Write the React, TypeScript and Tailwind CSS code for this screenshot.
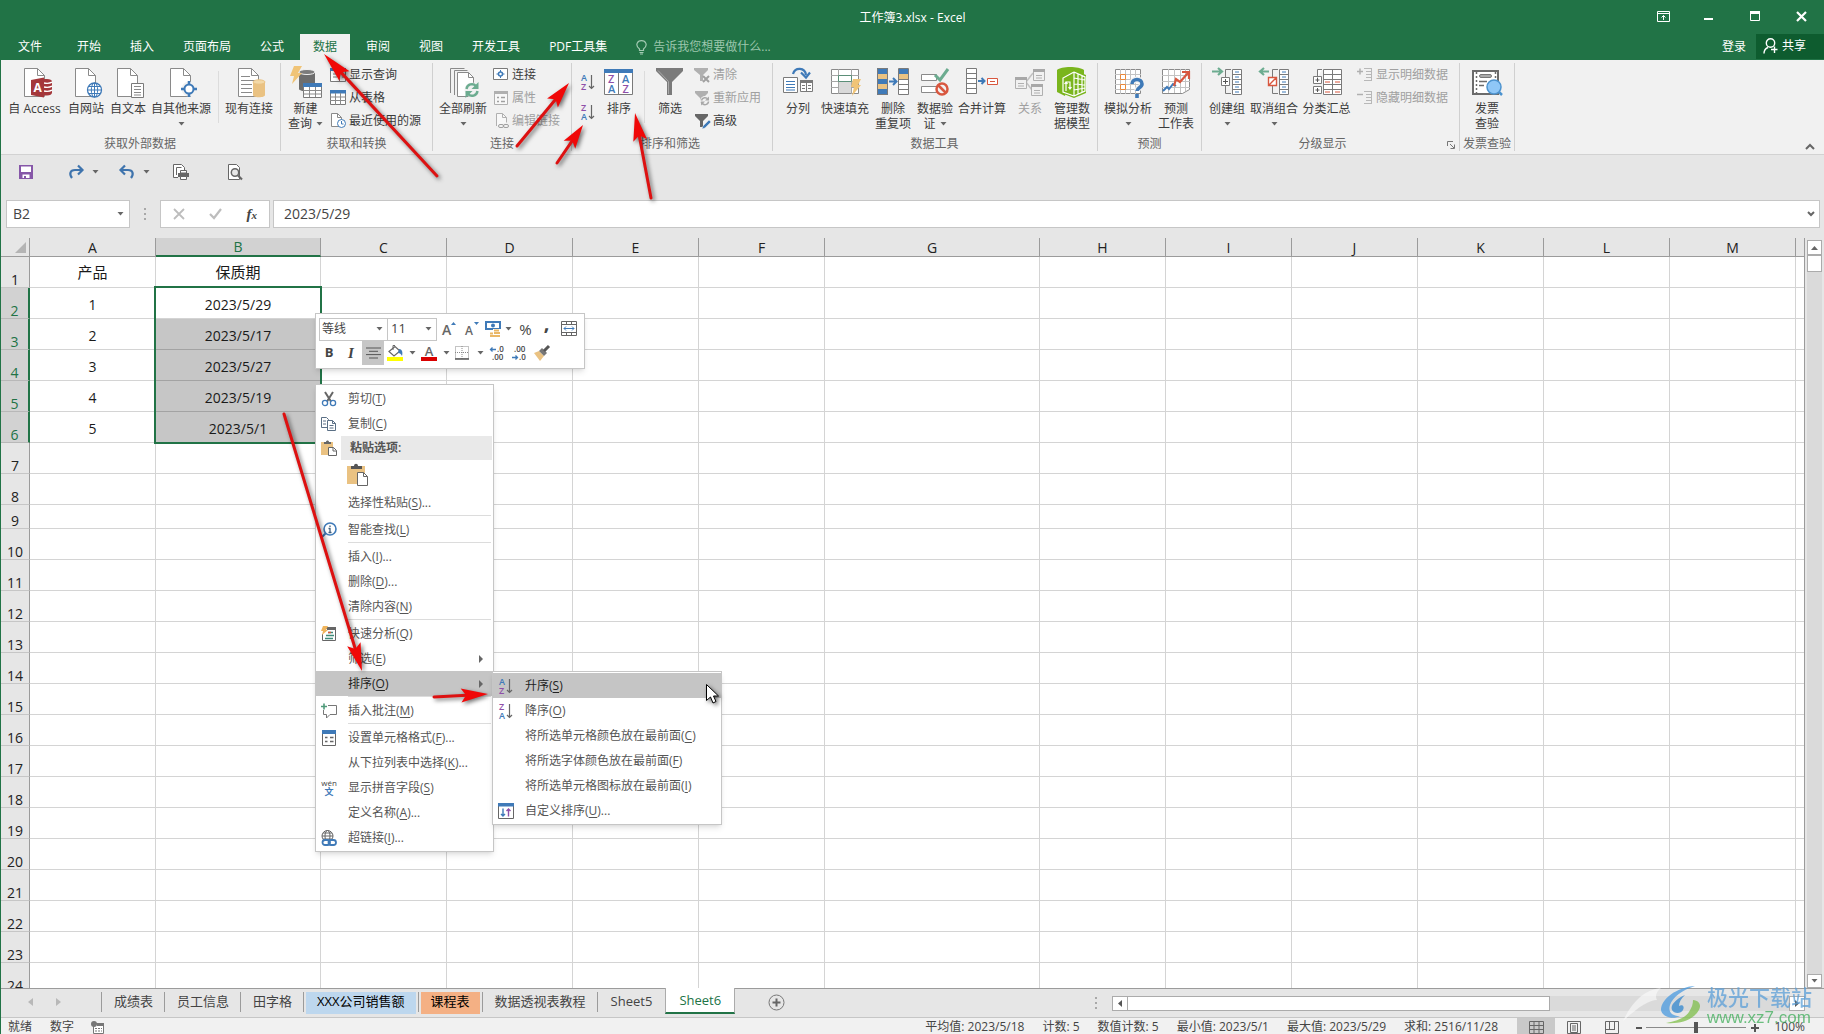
import { useState, type ReactNode } from "react";

interface BigItem {
  lines: string[];
  width: string;
  icon: ReactNode;
  caret?: boolean;
  disabled?: boolean;
}

interface SmallItem {
  label: string;
  icon: ReactNode;
  disabled?: boolean;
}

interface MenuEntry {
  label?: string;
  hotkey?: string;
  more?: boolean;
  icon?: ReactNode;
  arrow?: boolean;
  active?: boolean;
  kind?: "separator" | "header" | "paste";
}

const COLUMNS = [
  { name: "A", width: "w-[126px]" },
  { name: "B", width: "w-[165px]" },
  { name: "C", width: "w-[126px]" },
  { name: "D", width: "w-[126px]" },
  { name: "E", width: "w-[126px]" },
  { name: "F", width: "w-[126px]" },
  { name: "G", width: "w-[215px]" },
  { name: "H", width: "w-[126px]" },
  { name: "I", width: "w-[126px]" },
  { name: "J", width: "w-[126px]" },
  { name: "K", width: "w-[126px]" },
  { name: "L", width: "w-[126px]" },
  { name: "M", width: "w-[126px]" },
];

const ROWS: Record<number, string[]> = {
  1: ["产品", "保质期"],
  2: ["1", "2023/5/29"],
  3: ["2", "2023/5/17"],
  4: ["3", "2023/5/27"],
  5: ["4", "2023/5/19"],
  6: ["5", "2023/5/1"],
};

const TABS = ["开始", "插入", "页面布局", "公式", "数据", "审阅", "视图", "开发工具", "PDF工具集"];

/* ---------- icons ---------- */

function Svg({ size = 32, children }: { size?: number; children: ReactNode }) {
  return (
    <svg width={size} height={size} viewBox={`0 0 ${size} ${size}`} fill="none" className="shrink-0 overflow-visible" aria-hidden="true">
      {children}
    </svg>
  );
}

function Caret() {
  return (
    <svg width="7" height="4" viewBox="0 0 7 4" className="inline-block shrink-0" aria-hidden="true">
      <path d="M0.500 0h6L3.500 3.500z" fill="#666" />
    </svg>
  );
}

function PageShape() {
  return (
    <>
      <path d="M5.500 2.500h13l7 7v21h-20z" fill="#fff" stroke="#8a8a8a" />
      <path d="M18.500 2.500v7h7" stroke="#8a8a8a" />
    </>
  );
}

const AccessIcon = (
  <Svg>
    <PageShape />
    <path d="M24 13h4c3 0 5 1 5 2.500v11c0 1.800-2 3-5 3h-4z" fill="#a4373a" />
    <path d="M25 17c3 .6 6 .3 8-.8M25 21c3 .6 6 .3 8-.8M25 25c3 .6 6 .3 8-.8" stroke="#fff" strokeWidth="1.400" />
    <path d="M12 14l13-2.500v20L12 29z" fill="#a4373a" />
    <text x="14.500" y="26" fontSize="12" fontWeight="700" fill="#fff" fontFamily="Open Sans">A</text>
  </Svg>
);

const WebIcon = (
  <Svg>
    <PageShape />
    <circle cx="24.500" cy="24" r="7" fill="#fff" stroke="#3f7ab8" strokeWidth="1.300" />
    <ellipse cx="24.500" cy="24" rx="3.200" ry="7" stroke="#3f7ab8" />
    <path d="M17.500 24h14M18.500 20.500h12M18.500 27.500h12M24.500 17v14" stroke="#3f7ab8" />
  </Svg>
);

const TextIcon = (
  <Svg>
    <PageShape />
    <path d="M19.500 17.500h12v14h-12z" fill="#fff" stroke="#7a7a7a" />
    <path d="M22 20.500h7M22 23.500h7M22 26.500h7M22 29h7" stroke="#8a8a8a" />
  </Svg>
);

const SourceIcon = (
  <Svg>
    <PageShape />
    <circle cx="24" cy="23" r="7.500" fill="#f1f1f1" />
    <circle cx="24" cy="23" r="4.500" fill="#fff" stroke="#3f7ab8" strokeWidth="2" />
    <path d="M24 15v4M24 27v4M16 23h4M28 23h4" stroke="#3f7ab8" strokeWidth="2.500" />
  </Svg>
);

const ExistingIcon = (
  <Svg>
    <PageShape />
    <path d="M8 10.500h9M8 14.500h14M8 18.500h11M8 22.500h11M8 26.500h11" stroke="#8a8a8a" />
    <path d="M20 16v13c0 3 12 3 12 0V16z" fill="#eac282" />
    <ellipse cx="26" cy="16" rx="6" ry="2.200" fill="#f3d9a8" stroke="#eac282" />
  </Svg>
);

const NewQueryIcon = (
  <Svg>
    <path d="M9 6v17c0 3 16 3 16 0V6z" fill="#6d6d6d" />
    <ellipse cx="17" cy="6" rx="8" ry="2.500" fill="#7b7b7b" stroke="#f1f1f1" />
    <path d="M4 0h8L8 7h4L2 18l2-8H0z" fill="#f0c477" />
    <path d="M13.500 17.500h18v14h-18z" fill="#fff" stroke="#7a7a7a" />
    <path d="M13 17h19v4H13z" fill="#3f7ab8" />
    <path d="M13.500 24.500h18M13.500 28h18M19.500 21v10M25.500 21v10" stroke="#8a8a8a" />
  </Svg>
);

const RefreshAllIcon = (
  <Svg>
    <path d="M3.500 27V2.500h14M7.500 29V4.500h13" stroke="#8a8a8a" />
    <path d="M10.500 6.500h11l5 5v19h-16z" fill="#fff" stroke="#8a8a8a" />
    <path d="M21.500 6.500v5h5" stroke="#8a8a8a" />
    <circle cx="25" cy="24" r="7.500" fill="#f1f1f1" />
    <path d="M19.500 23a5.500 5.500 0 0 1 9.500-3M30.500 25a5.500 5.500 0 0 1-9.500 3" stroke="#6cac90" strokeWidth="2.400" />
    <path d="M31.500 16v7h-7zM18.500 32v-7h7z" fill="#6cac90" />
  </Svg>
);

const SortIcon = (
  <Svg>
    <path d="M1.500 3.500h28v25h-28z" fill="#fff" stroke="#7a7a7a" />
    <path d="M1 3h29v4H1z" fill="#3f7ab8" />
    <path d="M15.500 7v21" stroke="#7a7a7a" />
    <g fontSize="11" fontWeight="600" fontFamily="Open Sans">
      <text x="5" y="17" fill="#8e4fa8">Z</text>
      <text x="5" y="27" fill="#3f7ab8">A</text>
      <text x="19" y="17" fill="#3f7ab8">A</text>
      <text x="19.500" y="27" fill="#8e4fa8">Z</text>
    </g>
  </Svg>
);

const FilterIcon = (
  <Svg>
    <path d="M2 2h27v3L18 16v13h-5V16L2 5z" fill="#7a7a7a" />
    <path d="M4 4.500l10.500 11V28" stroke="#a9a9a9" />
  </Svg>
);

const SplitIcon = (
  <Svg>
    <path d="M1.500 11.500h14v15h-14z" fill="#fff" stroke="#7a7a7a" />
    <path d="M4 15.500h9M4 18.500h9M4 21.500h9M4 24h9" stroke="#3f7ab8" />
    <path d="M18.500 14.500h12v11h-12z" fill="#fff" stroke="#7a7a7a" />
    <path d="M18 14h13v3H18z" fill="#7a7a7a" />
    <path d="M24.500 17v8M20 19.500h3M20 22.500h3M26 19.500h3M26 22.500h3" stroke="#7a7a7a" />
    <path d="M11 8c2-7 12-7 13 1" stroke="#3f7ab8" strokeWidth="2.200" />
    <path d="M19 6.500l5 5 4-5" stroke="#3f7ab8" strokeWidth="2.200" />
  </Svg>
);

const FlashFillIcon = (
  <Svg>
    <path d="M2.500 3.500h27v24h-27z" fill="#fff" stroke="#8a8a8a" />
    <path d="M9.500 3v25M22.500 3v25M2 9.500h28M2 15.500h28M2 21.500h28" stroke="#a6a6a6" />
    <path d="M10 16h12v11H10z" fill="#d9d9d9" />
    <path d="M9.500 9.500h13v6h-13z" fill="#fff" stroke="#5b8f78" />
    <path d="M24 13h8l-3 6h3l-9 11 2-9h-3z" fill="#f0c477" />
  </Svg>
);

const DedupeIcon = (
  <Svg>
    <path d="M0 2h11v27H0z" fill="#3f7ab8" />
    <path d="M0 8h11v5H0zM0 18h11v5H0z" fill="#eac282" />
    <path d="M0.500 2.500h10v26H0.500z" stroke="#7a7a7a" />
    <path d="M21.500 2.500h10v26h-10z" fill="#fff" stroke="#7a7a7a" />
    <path d="M22 3h9v5h-9z" fill="#3f7ab8" />
    <path d="M22 8h9v5h-9z" fill="#eac282" />
    <path d="M21.500 13.500h10M21.500 18.500h10M21.500 23.500h10" stroke="#7a7a7a" />
    <path d="M12 15.500h7M16 12l3.500 3.500L16 19" stroke="#3f7ab8" strokeWidth="2" />
  </Svg>
);

const ValidateIcon = (
  <Svg>
    <path d="M2.500 8.500h15v6h-15zM2.500 20.500h15v6h-15z" fill="#fff" stroke="#8a8a8a" />
    <path d="M16 9l5 5 8-11" stroke="#6cac90" strokeWidth="3" />
    <circle cx="23" cy="23" r="5.500" fill="#f1f1f1" stroke="#d8573f" strokeWidth="2.500" />
    <path d="M19 19l8 8" stroke="#d8573f" strokeWidth="2.500" />
  </Svg>
);

const ConsolidateIcon = (
  <Svg>
    <path d="M0.500 2.500h10v25h-10z" fill="#fff" stroke="#7a7a7a" />
    <path d="M0 7.500h11M0 12.500h11M0 17.500h11M0 22.500h11" stroke="#7a7a7a" />
    <path d="M12 15h6M15.500 12l3 3-3 3" stroke="#3f7ab8" strokeWidth="2" />
    <path d="M21.500 12.500h10v6h-10z" fill="#fff" stroke="#d8573f" />
    <path d="M24 15.500h5" stroke="#d8573f" />
  </Svg>
);

const RelationIcon = (
  <Svg>
    <path d="M12 16l7-9M12 16l6 8" stroke="#c2c2c2" strokeWidth="1.500" />
    <path d="M1.500 11.500h11v11h-11zM19.500 3.500h11v11h-11zM17.500 18.500h11v11h-11z" fill="#f1f1f1" stroke="#b0b0b0" />
    <path d="M1 11h12v3H1zM19 3h12v3H19zM17 18h12v3H17z" fill="#a8a8a8" />
    <path d="M4 17.500h6M4 20h6M22 9.500h6M22 12h6M20 24.500h6M20 27h6" stroke="#b0b0b0" />
  </Svg>
);

const DataModelIcon = (
  <Svg>
    <path d="M1 4c4-4 22-4 27 0v7H13L9 30l-8-4z" fill="#7ab51d" />
    <path d="M5 11l13-7 12 5v18l-12 5-13-5z" fill="#7ab51d" />
    <path d="M18 6l-11 6v14l11 4" stroke="#fff" strokeWidth="1.200" />
    <path d="M18 6v24M18 6l11 5v14l-11 5M22 8v20M26 10v16M18 12l11 2M18 18l11 1M18 24l11-2" stroke="#fff" strokeWidth="1.200" />
    <path d="M10 25v-9h4v7M8.500 18l1.500-2 1.500 2M12.500 21l1.500 2 1.500-2" stroke="#fff" strokeWidth="1.200" />
  </Svg>
);

const WhatIfIcon = (
  <Svg>
    <path d="M3.500 3.500h25v24h-25z" fill="#fff" stroke="#8a8a8a" />
    <path d="M8.500 3v25M13.500 3v25M18.500 3v25M23.500 3v25M3 8.500h26M3 13.500h26M3 18.500h26M3 23.500h26" stroke="#c3c3c3" />
    <path d="M8.500 8.500h5v5h-5zM8.500 18.500h5v5h-5z" fill="#fff" stroke="#e8883a" />
    <path d="M20 18c0-6 10-6 10 0 0 4-5 3.500-5 7" stroke="#f1f1f1" strokeWidth="6" />
    <path d="M20 18c0-6 10-6 10 0 0 4-5 3.500-5 7M25 28v4" stroke="#3f7ab8" strokeWidth="3.600" />
  </Svg>
);

const ForecastIcon = (
  <Svg>
    <path d="M2.500 3.500h27v20l-7 4h-20z" fill="#fff" stroke="#8a8a8a" />
    <path d="M8.500 3v24M14.500 3v24M20.500 3v24M25.500 3v22M2 9.500h28M2 15.500h28M2 21.500h28" stroke="#c3c3c3" />
    <path d="M3 25l4-4 2 2 4-5 3 2" stroke="#3f7ab8" strokeWidth="2" />
    <path d="M14 20l2-7 4 3 8-9" stroke="#d8573f" strokeWidth="2.200" />
    <path d="M22 6h7v7" stroke="#d8573f" strokeWidth="2.200" />
  </Svg>
);

function OutlineRows() {
  return (
    <>
      <path d="M21.500 3.500h9v25h-9z" fill="#fff" stroke="#7a7a7a" />
      <path d="M21 8.500h10M21 13.500h10M21 18.500h10M21 23.500h10" stroke="#7a7a7a" />
      <path d="M24 6h4M24 11h4M24 16h4M24 21h4M24 26h4" stroke="#3f7ab8" />
    </>
  );
}

const GroupIcon = (
  <Svg>
    <OutlineRows />
    <path d="M20 3.500h-5.500v24H20" stroke="#7a7a7a" />
    <path d="M10.500 11.500h8v8h-8z" fill="#fff" stroke="#7a7a7a" />
    <path d="M12 15.500h5M14.500 13v5" stroke="#555" />
    <path d="M1 5.500h9M7 2l4 3.500L7 9" stroke="#6cac90" strokeWidth="2.200" />
  </Svg>
);

const UngroupIcon = (
  <Svg>
    <OutlineRows />
    <path d="M20 3.500h-5.500v24H20" stroke="#7a7a7a" />
    <path d="M10.500 11.500h8v8h-8zM11 19l7-7" fill="#fff" stroke="#d8573f" strokeWidth="1.400" />
    <path d="M2 5.500h9M6 2L2 5.500 6 9" stroke="#6cac90" strokeWidth="2.200" />
  </Svg>
);

const SubtotalIcon = (
  <Svg>
    <path d="M12.500 3.500h18v25h-18z" fill="#fff" stroke="#7a7a7a" />
    <path d="M12 8.500h19M12 13.500h19M12 18.500h19M12 23.500h19M21.500 3v25" stroke="#7a7a7a" />
    <path d="M14 16h5M24 16h5M14 26h5M24 26h5" stroke="#d8573f" />
    <path d="M11 3.500H6.500v8M2.500 10.500h8v7h-8zM2.500 20.500h8v7h-8z" fill="#fff" stroke="#7a7a7a" />
    <path d="M4.500 14h4M6.500 12v4M4.500 24h4M6.500 22v4" stroke="#555" />
  </Svg>
);

const InvoiceIcon = (
  <Svg>
    <path d="M2 5h25v23H2z" fill="#fff" stroke="#6b6b6b" strokeWidth="2" />
    <path d="M5.500 6v21M24.500 6v12" stroke="#6b6b6b" strokeWidth="1.500" strokeDasharray="2 2" />
    <rect x="8.500" y="8.500" width="12" height="3" rx="1.500" fill="#aaa" stroke="#777" />
    <path d="M8 15.500h8M8 19.500h5" stroke="#6b6b6b" strokeWidth="1.500" />
    <circle cx="23" cy="21" r="7" fill="#8fc7f7" stroke="#4c93cf" strokeWidth="1.500" />
    <path d="M28 26l3 3" stroke="#4c93cf" strokeWidth="2.500" />
  </Svg>
);

const ShowQueryIcon = (
  <Svg size={16}>
    <path d="M0.500 1.500h15v13h-15z" fill="#fff" stroke="#7a7a7a" />
    <path d="M0 1h16v3H0z" fill="#3f7ab8" />
    <path d="M9.500 4v11M3 7h4M3 10h4M12 7h2M12 10h2" stroke="#7a7a7a" />
  </Svg>
);

const FromTableIcon = (
  <Svg size={16}>
    <path d="M0.500 0.500h15v14h-15z" fill="#fff" stroke="#7a7a7a" />
    <path d="M0 0h16v3.500H0z" fill="#3f7ab8" />
    <path d="M5.500 3v12M10.500 3v12M0 7h16M0 10.500h16" stroke="#8a8a8a" />
  </Svg>
);

const RecentIcon = (
  <Svg size={16}>
    <path d="M1.500 0.500h6l4 4v9h-10z" fill="#fff" stroke="#8a8a8a" />
    <path d="M7.500 0.500v4h4" stroke="#8a8a8a" />
    <circle cx="11.500" cy="10.500" r="4" fill="#fff" stroke="#3f7ab8" />
    <path d="M11.500 8v3h2" stroke="#3f7ab8" />
  </Svg>
);

const ConnectIcon = (
  <Svg size={16}>
    <path d="M0.500 1.500h14v11h-14z" fill="#fff" stroke="#7a7a7a" />
    <circle cx="7.500" cy="7" r="2" stroke="#3f7ab8" strokeWidth="1.500" />
    <path d="M7.500 3v2M7.500 9v2M3.500 7h2M9.500 7h2" stroke="#3f7ab8" />
  </Svg>
);

const PropsIcon = (
  <Svg size={16}>
    <path d="M1.500 1.500h13v13h-13z" fill="#f8f8f8" stroke="#b0b0b0" />
    <path d="M1 1h14v3H1z" fill="#b0b0b0" />
    <path d="M4 7.500h2M8 7.500h4M4 11.500h2M8 11.500h4" stroke="#a0a0a0" strokeWidth="1.500" />
  </Svg>
);

const EditLinkIcon = (
  <Svg size={16}>
    <path d="M3.500 13V0.500h6l4 4v5" fill="#f8f8f8" stroke="#b0b0b0" />
    <path d="M9.500 0.500v4h4" stroke="#b0b0b0" />
    <rect x="5.500" y="11.500" width="5" height="3" rx="1.500" stroke="#a0a0a0" />
    <rect x="10.500" y="11.500" width="5" height="3" rx="1.500" stroke="#a0a0a0" />
  </Svg>
);

const ClearIcon = (
  <Svg size={16}>
    <path d="M0 1h14v2L9 8v6H6V8L0 3z" fill="#b0b0b0" />
    <path d="M9 9l6 6M15 9l-6 6" stroke="#a0a0a0" strokeWidth="2" />
  </Svg>
);

const ReapplyIcon = (
  <Svg size={16}>
    <path d="M1 1h13v2L9 8v5H6V8L1 3z" fill="#b0b0b0" />
    <circle cx="11" cy="11" r="5" fill="#f1f1f1" />
    <path d="M7.500 10.500a3.500 3.500 0 0 1 6.500-1M14.500 11.500a3.500 3.500 0 0 1-6.500 1.500" stroke="#a8a8a8" strokeWidth="1.500" />
    <path d="M15 6.500v4h-4zM7 15.500v-4h4z" fill="#a8a8a8" />
  </Svg>
);

const AdvancedIcon = (
  <Svg size={16}>
    <path d="M1 1h13v2L9 8v6H6V8L1 3z" fill="#666" />
    <path d="M15 7l-6 6-1 3 3-1 6-6z" fill="#3f7ab8" stroke="#f1f1f1" strokeWidth="0.500" />
  </Svg>
);

function DetailIcon({ plus }: { plus: boolean }) {
  return (
    <Svg size={16}>
      <path d={plus ? "M0 4.500h6M3 1.500v6" : "M0 4.500h6"} stroke="#b0b0b0" strokeWidth="1.500" />
      <path d="M7 1.500h8M9 4.500h6M9 7.500h6M9 10.500h6M7 13.500h8M14.500 1v13" stroke="#b8b8b8" />
    </Svg>
  );
}

function OrderIcon({ first, second }: { first: string; second: string }) {
  const tone = (c: string) => (c === "A" ? "#3f7ab8" : "#8e4fa8");
  return (
    <Svg size={16}>
      <g fontSize="9" fontWeight="600" fontFamily="Open Sans">
        <text x="1" y="7" fill={tone(first)}>{first}</text>
        <text x="1" y="15.500" fill={tone(second)}>{second}</text>
      </g>
      <path d="M11.500 1v13.500M9 12l2.500 2.500L14 12" stroke="#666" strokeWidth="1.200" />
    </Svg>
  );
}

const CutIcon = (
  <Svg size={16}>
    <path d="M4 1l6 9.500M12 1L6 10.500" stroke="#666" strokeWidth="2" />
    <circle cx="4" cy="12" r="2.600" stroke="#3f7ab8" strokeWidth="1.300" />
    <circle cx="12" cy="12" r="2.600" stroke="#3f7ab8" strokeWidth="1.300" />
  </Svg>
);

const CopyIcon = (
  <Svg size={16}>
    <path d="M0.500 1.500h5l2 2v8h-7z" fill="#fff" stroke="#5a6f85" />
    <path d="M6.500 4.500h5l3 3v7h-8z" fill="#fff" stroke="#5a6f85" />
    <path d="M11.500 4.500v3h3M8.500 9.500h4M8.500 12h4M2 5h3M2 8h3" stroke="#5a6f85" />
  </Svg>
);

const PasteIcon = (
  <Svg size={16}>
    <path d="M0 2h12v13H0z" fill="#eac282" />
    <path d="M3 4V2h2c0-2 3-2 3 0h2v2z" fill="#666" />
    <path d="M7.500 7.500h5l3 3v5h-8z" fill="#fff" stroke="#666" />
    <path d="M12 7.500v3.500h3.500" stroke="#666" />
  </Svg>
);

const PasteBigIcon = (
  <Svg size={22}>
    <path d="M0 2h18v18H0z" fill="#eac282" />
    <path d="M4 5V2h3c0-3 4-3 4 0h4v3z" fill="#555" />
    <path d="M10.500 8.500h6l4 4v9h-10z" fill="#fff" stroke="#666" />
    <path d="M16.500 8.500v4h4" stroke="#666" />
  </Svg>
);

const LookupIcon = (
  <Svg size={16}>
    <circle cx="9" cy="7" r="6" fill="#fff" stroke="#3f7ab8" strokeWidth="1.600" />
    <path d="M5 11l-4 4" stroke="#3f7ab8" strokeWidth="2" />
    <path d="M9 6v4.500M7.500 10.500h3M7.500 6.500h2M9 3.500v1.500" stroke="#3f5f7f" strokeWidth="1.300" />
  </Svg>
);

const QuickIcon = (
  <Svg size={16}>
    <path d="M3.500 2.500h11v12h-13V8" fill="#fff" stroke="#666" />
    <path d="M6 1h9v3H6z" fill="#666" />
    <path d="M7 6.500h5M5 9.500h8M4 12.500h8" stroke="#3f8a7a" strokeWidth="1.500" />
    <path d="M7 6.500h3" stroke="#d8573f" strokeWidth="1.500" />
    <path d="M2 0h5L5 4h2L1 9l1-4H0z" fill="#f0b55d" />
  </Svg>
);

const CommentIcon = (
  <Svg size={16}>
    <path d="M7 2.500h8.500v9H9L5.500 15v-3.500H2.500V7" stroke="#777" />
    <path d="M0 3.500h6M3 0.500v6" stroke="#4f9a7a" strokeWidth="1.600" />
  </Svg>
);

const FormatIcon = (
  <Svg size={16}>
    <path d="M1.500 1.500h13v14h-13z" fill="#fff" stroke="#666" />
    <path d="M1 0h14v4H1z" fill="#3f7ab8" />
    <path d="M4 7.500h2.500M9 7.500h3.500M4 11.500h2.500M9 11.500h3.500" stroke="#666" strokeWidth="1.500" />
  </Svg>
);

const PinyinIcon = (
  <Svg size={16}>
    <text x="8" y="6" fontSize="8" textAnchor="middle" fill="#444" fontFamily="Open Sans">wén</text>
    <text x="8" y="15" fontSize="9" fontWeight="700" textAnchor="middle" fill="#3f7ab8" fontFamily="Noto Sans CJK SC">文</text>
  </Svg>
);

const LinkIcon = (
  <Svg size={16}>
    <circle cx="6.500" cy="6" r="5.500" stroke="#666" />
    <ellipse cx="6.500" cy="6" rx="2.500" ry="5.500" stroke="#666" />
    <path d="M1 6h11M2 3h9M2 9h9" stroke="#666" />
    <rect x="1.500" y="10" width="7.500" height="5" rx="2.500" fill="#fff" stroke="#3f7ab8" strokeWidth="1.800" />
    <rect x="7.500" y="10" width="7.500" height="5" rx="2.500" stroke="#3f7ab8" strokeWidth="1.800" />
  </Svg>
);

const CustomSortIcon = (
  <Svg size={16}>
    <path d="M0.500 1.500h15v14h-15z" fill="#fff" stroke="#666" />
    <path d="M0 0h16v3.500H0z" fill="#3f7ab8" />
    <path d="M5 5.500V13M3 11l2 2 2-2" stroke="#3f7ab8" strokeWidth="1.400" />
    <path d="M10.500 13.500V6M8.500 8l2-2 2 2" stroke="#8e4fa8" strokeWidth="1.400" />
  </Svg>
);

/* ---------- ribbon ---------- */

function BigButton({ item }: { item: BigItem }) {
  return (
    <button
      className={`flex shrink-0 flex-col items-center pt-[3px] leading-[15px] ${item.width} ${item.disabled ? "text-[#a0a0a0]" : "text-[#3c3c3c]"}`}
    >
      {item.icon}
      <span className="mt-[3px] whitespace-nowrap">{item.lines[0]}</span>
      {(item.lines[1] || item.caret) && (
        <span className="flex h-[15px] items-center gap-1 whitespace-nowrap">
          {item.lines[1]}
          {item.caret && <Caret />}
        </span>
      )}
    </button>
  );
}

function SmallColumn({ items, pad = "pl-1" }: { items: SmallItem[]; pad?: string }) {
  return (
    <div className={`flex flex-col ${pad}`}>
      {items.map((item) => (
        <button
          key={item.label}
          className={`flex h-[23px] items-center gap-[3px] whitespace-nowrap ${item.disabled ? "text-[#a0a0a0]" : "text-[#3c3c3c]"}`}
        >
          {item.icon}
          {item.label}
        </button>
      ))}
    </div>
  );
}

function RibbonGroup({ title, className, launcher, children }: { title: string; className: string; launcher?: boolean; children: ReactNode }) {
  return (
    <section aria-label={title} className={`relative flex h-[88px] shrink-0 flex-col border-r border-[#d0d0d0] ${className}`}>
      <div className="flex flex-1">{children}</div>
      <div className={`-ml-1 h-4 text-center leading-[18px] whitespace-nowrap text-[#666] ${launcher ? "pr-4" : ""}`}>{title}</div>
      {launcher && (
        <button aria-label="分级显示设置" className="absolute right-1 bottom-0.5">
          <svg width="8" height="8" viewBox="0 0 8 8" fill="none">
            <path d="M0.500 5V0.500H6M3 3l4 4M7.500 3.500v4h-4" stroke="#777" />
          </svg>
        </button>
      )}
    </section>
  );
}

function InnerRule({ className }: { className: string }) {
  return <div className={`mt-2 h-[52px] w-px shrink-0 bg-[#dcdcdc] ${className}`} />;
}

function Ribbon() {
  return (
    <div className="relative flex shrink-0 border-b border-[#d2d2d2] bg-[#f1f1f1] pt-[3px] pb-[3px] text-[12px]">
      <RibbonGroup title="获取外部数据" className="w-[280px] pl-[3px]">
        <BigButton item={{ lines: ["自 Access"], width: "w-[61px]", icon: AccessIcon }} />
        <BigButton item={{ lines: ["自网站"], width: "w-[42px]", icon: WebIcon }} />
        <BigButton item={{ lines: ["自文本"], width: "w-[42px]", icon: TextIcon }} />
        <BigButton item={{ lines: ["自其他来源"], width: "w-[64px]", icon: SourceIcon, caret: true }} />
        <InnerRule className="mx-[5px]" />
        <BigButton item={{ lines: ["现有连接"], width: "w-[50px]", icon: ExistingIcon }} />
      </RibbonGroup>
      <RibbonGroup title="获取和转换" className="w-[152px] pl-1">
        <BigButton item={{ lines: ["新建", "查询"], width: "w-[41px]", icon: NewQueryIcon, caret: true }} />
        <SmallColumn
          items={[
            { label: "显示查询", icon: ShowQueryIcon },
            { label: "从表格", icon: FromTableIcon },
            { label: "最近使用的源", icon: RecentIcon },
          ]}
        />
      </RibbonGroup>
      <RibbonGroup title="连接" className="w-[139px] pl-1">
        <BigButton item={{ lines: ["全部刷新"], width: "w-[52px]", icon: RefreshAllIcon, caret: true }} />
        <SmallColumn
          items={[
            { label: "连接", icon: ConnectIcon },
            { label: "属性", icon: PropsIcon, disabled: true },
            { label: "编辑链接", icon: EditLinkIcon, disabled: true },
          ]}
        />
      </RibbonGroup>
      <RibbonGroup title="排序和筛选" className="w-[201px]">
        <div className="flex w-[25px] flex-col gap-[14px] pt-[11px] pl-2">
          <button aria-label="升序"><OrderIcon first="A" second="Z" /></button>
          <button aria-label="降序"><OrderIcon first="Z" second="A" /></button>
        </div>
        <BigButton item={{ lines: ["排序"], width: "w-[44px]", icon: SortIcon }} />
        <InnerRule className="mx-[3px]" />
        <BigButton item={{ lines: ["筛选"], width: "w-[44px]", icon: FilterIcon }} />
        <SmallColumn
          pad="pl-0.5"
          items={[
            { label: "清除", icon: ClearIcon, disabled: true },
            { label: "重新应用", icon: ReapplyIcon, disabled: true },
            { label: "高级", icon: AdvancedIcon },
          ]}
        />
      </RibbonGroup>
      <RibbonGroup title="数据工具" className="w-[325px] pl-[3px]">
        <BigButton item={{ lines: ["分列"], width: "w-[44px]", icon: SplitIcon }} />
        <BigButton item={{ lines: ["快速填充"], width: "w-[50px]", icon: FlashFillIcon }} />
        <BigButton item={{ lines: ["删除", "重复项"], width: "w-[46px]", icon: DedupeIcon }} />
        <BigButton item={{ lines: ["数据验", "证"], width: "w-[38px]", icon: ValidateIcon, caret: true }} />
        <BigButton item={{ lines: ["合并计算"], width: "w-[56px]", icon: ConsolidateIcon }} />
        <BigButton item={{ lines: ["关系"], width: "w-[40px]", icon: RelationIcon, disabled: true }} />
        <BigButton item={{ lines: ["管理数", "据模型"], width: "w-[44px]", icon: DataModelIcon }} />
      </RibbonGroup>
      <RibbonGroup title="预测" className="w-[104px] pl-1">
        <BigButton item={{ lines: ["模拟分析"], width: "w-[52px]", icon: WhatIfIcon, caret: true }} />
        <BigButton item={{ lines: ["预测", "工作表"], width: "w-[44px]", icon: ForecastIcon }} />
      </RibbonGroup>
      <RibbonGroup title="分级显示" className="w-[258px] pl-1" launcher>
        <BigButton item={{ lines: ["创建组"], width: "w-[42px]", icon: GroupIcon, caret: true }} />
        <BigButton item={{ lines: ["取消组合"], width: "w-[52px]", icon: UngroupIcon, caret: true }} />
        <BigButton item={{ lines: ["分类汇总"], width: "w-[53px]", icon: SubtotalIcon }} />
        <SmallColumn
          items={[
            { label: "显示明细数据", icon: <DetailIcon plus />, disabled: true },
            { label: "隐藏明细数据", icon: <DetailIcon plus={false} />, disabled: true },
          ]}
        />
      </RibbonGroup>
      <RibbonGroup title="发票查验" className="w-[55px] pl-1">
        <BigButton item={{ lines: ["发票", "查验"], width: "w-[46px]", icon: InvoiceIcon }} />
      </RibbonGroup>
      <button aria-label="折叠功能区" className="mr-[9px] mb-px ml-auto self-end">
        <svg width="10" height="7" viewBox="0 0 10 7" fill="none">
          <path d="M1 6l4-4 4 4" stroke="#666" strokeWidth="2" />
        </svg>
      </button>
    </div>
  );
}

/* ---------- top bars ---------- */

function TitleBar() {
  return (
    <header className="shrink-0 bg-[#217346] text-[12px] text-white">
      <div className="flex h-[34px] items-center">
        <div className="w-[184px]" />
        <h1 className="flex-1 pt-0.5 text-center">工作簿3.xlsx - Excel</h1>
        <div className="flex w-[184px]">
          <button aria-label="功能区显示选项" className="flex w-[46px] justify-center">
            <svg width="13" height="11" viewBox="0 0 13 11" fill="none">
              <path d="M0.500 0.500h12v10H0.500zM0.500 2.500h12M6.500 9V4.500M4.500 6.500l2-2 2 2" stroke="#fff" />
            </svg>
          </button>
          <button aria-label="最小化" className="flex w-[46px] justify-center">
            <svg width="10" height="12" viewBox="0 0 10 12"><path d="M0 7h9v2H0z" fill="#fff" /></svg>
          </button>
          <button aria-label="最大化" className="flex w-[46px] justify-center">
            <svg width="11" height="11" viewBox="0 0 11 11" fill="none">
              <path d="M0.500 0.500h9v9h-9z" stroke="#fff" />
              <path d="M0 0h10v3H0z" fill="#fff" />
            </svg>
          </button>
          <button aria-label="关闭" className="flex w-[46px] justify-center">
            <svg width="11" height="11" viewBox="0 0 11 11"><path d="M1 1l9 9M10 1l-9 9" stroke="#fff" strokeWidth="2.200" /></svg>
          </button>
        </div>
      </div>
      <nav className="flex h-[26px] items-stretch gap-[3px]">
        <button className="mr-0.5 w-[58px]">文件</button>
        {TABS.map((tab) => (
          <button key={tab} className={`px-[13px] whitespace-nowrap ${tab === "数据" ? "bg-[#f1f1f1] text-[#217346]" : ""}`}>
            {tab}
          </button>
        ))}
        <label className="ml-[13px] flex items-center gap-[6px]">
          <svg width="11" height="15" viewBox="0 0 11 15" fill="none">
            <path d="M3.500 10.500V9C-1.500 5 1.500 0.700 5.500 0.700S12.500 5 7.500 9v1.500zM3.500 12.500h4M4 14h3" stroke="#a3cbb3" strokeWidth="1.200" />
          </svg>
          <input
            aria-label="告诉我您想要做什么"
            placeholder="告诉我您想要做什么..."
            className="w-[150px] bg-transparent outline-none placeholder:text-[#9cc6ad] placeholder:opacity-100"
          />
        </label>
        <button className="ml-auto px-[7px]">登录</button>
        <button className="mb-px flex w-[68px] items-center gap-1 bg-[#0e5c2f] pb-0.5 pl-[7px]">
          <svg width="15" height="16" viewBox="0 0 15 16" fill="none">
            <circle cx="7.500" cy="5" r="4.200" stroke="#fff" strokeWidth="1.400" />
            <path d="M1 15.500c0-3 1.500-5 4-6M8 11.500h6.500M11.500 8.500v6.500" stroke="#fff" strokeWidth="1.400" />
          </svg>
          共享
        </button>
      </nav>
    </header>
  );
}

function QuickAccess() {
  return (
    <div className="flex h-[45px] shrink-0 items-center pb-[11px] pl-[17px]">
      <button aria-label="保存" className="w-[50px]">
        <Svg size={16}>
          <path d="M1 1h14v14H1z" fill="#8657a8" />
          <path d="M3 2.500h10v5.500H3zM4.500 10.500h7V14h-7z" fill="#fff" />
          <path d="M6 12h2v2H6z" fill="#8657a8" />
        </Svg>
      </button>
      <button aria-label="恢复" className="flex w-[51px] items-center gap-2">
        <Svg size={16}>
          <path d="M14 6H7C2 6 1 10 4 14" stroke="#3f74ad" strokeWidth="2.200" />
          <path d="M10 1.500L14.500 6 10 10.500" stroke="#3f74ad" strokeWidth="2.200" />
        </Svg>
        <Caret />
      </button>
      <button aria-label="撤消" className="flex w-[54px] items-center gap-2">
        <Svg size={16}>
          <path d="M2 6h7c5 0 6 4 3 8" stroke="#3f74ad" strokeWidth="2.200" />
          <path d="M6 1.500L1.500 6 6 10.500" stroke="#3f74ad" strokeWidth="2.200" />
        </Svg>
        <Caret />
      </button>
      <button aria-label="快速打印" className="w-[54px]">
        <Svg size={16}>
          <path d="M5 13.500H0.500v-13h8l3 3V6" fill="#fff" stroke="#666" />
          <path d="M3.500 11V3.500h5" stroke="#666" />
          <path d="M5 9h11v4H5z" fill="#666" />
          <path d="M7.500 6.500h6V9h-6zM7.500 12.500h6v3h-6z" fill="#fff" stroke="#666" />
        </Svg>
      </button>
      <button aria-label="打印预览">
        <Svg size={16}>
          <path d="M1.500 15.500V0.500h8l3 3v12z" fill="#fff" stroke="#666" />
          <circle cx="8" cy="8.500" r="3.700" fill="#e6e6e6" stroke="#666" strokeWidth="1.500" />
          <path d="M11 11.500l4 4" stroke="#666" strokeWidth="2.200" />
        </Svg>
      </button>
    </div>
  );
}

function FormulaBar() {
  const [name, setName] = useState("B2");
  const [formula, setFormula] = useState("2023/5/29");
  return (
    <div className="mb-[10px] flex h-7 shrink-0 pr-1 pl-[5px] text-[14px] text-[#444]">
      <div className="flex w-[124px] items-center border border-[#c6c6c6] bg-white pr-[5px] pl-[6px]">
        <input aria-label="名称框" value={name} onChange={(e) => setName(e.target.value)} className="w-0 flex-1 pb-0.5 outline-none" />
        <Caret />
      </div>
      <div className="flex w-[30px] flex-col items-center justify-center gap-[3px]">
        <span className="size-0.5 bg-[#a8a8a8]" />
        <span className="size-0.5 bg-[#a8a8a8]" />
        <span className="size-0.5 bg-[#a8a8a8]" />
      </div>
      <div className="flex w-[110px] items-center justify-around border border-[#c6c6c6] bg-white">
        <button aria-label="取消">
          <svg width="12" height="12" viewBox="0 0 12 12"><path d="M1 1l10 10M11 1L1 11" stroke="#bdbdbd" strokeWidth="1.800" /></svg>
        </button>
        <button aria-label="输入">
          <svg width="13" height="12" viewBox="0 0 13 12" fill="none"><path d="M1 6l4 4 7-9" stroke="#bdbdbd" strokeWidth="2.200" /></svg>
        </button>
        <button aria-label="插入函数" className="font-[Liberation_Serif] text-[15px] leading-4 font-bold italic">
          f<span className="text-[11px]">x</span>
        </button>
      </div>
      <div className="ml-[3px] flex flex-1 items-center border border-[#c6c6c6] bg-white pr-1 pl-[10px]">
        <input aria-label="编辑栏" value={formula} onChange={(e) => setFormula(e.target.value)} className="w-0 flex-1 pb-0.5 outline-none" />
        <svg width="8" height="6" viewBox="0 0 8 6" fill="none"><path d="M1 1l3 3 3-3" stroke="#666" strokeWidth="2" /></svg>
      </div>
    </div>
  );
}

/* ---------- grid ---------- */

function Grid() {
  const rows = Array.from({ length: 24 }, (_, i) => i + 1);
  return (
    <div className="flex min-h-0 flex-1 border-b border-[#9b9b9b]">
      <div className="min-w-0 flex-1 overflow-hidden border-r border-[#9b9b9b] bg-white">
        <table className="w-full table-fixed border-separate border-spacing-0 text-[14px] text-[#1a1a1a]">
          <colgroup>
            <col className="w-[29px]" />
            {COLUMNS.map((c) => (
              <col key={c.name} className={c.width} />
            ))}
            <col />
          </colgroup>
          <thead>
            <tr className="h-[19px] bg-[#e6e6e6] text-[#222]">
              <th aria-label="全选" className="border-r border-b border-[#9b9b9b] p-0">
                <svg width="11" height="11" viewBox="0 0 11 11" className="ml-[14px]"><path d="M11 0v11H0z" fill="#b4b4b4" /></svg>
              </th>
              {COLUMNS.map((c) => (
                <th
                  key={c.name}
                  className={`border-r px-0 pb-0 leading-4 font-normal ${c.name === "B" ? "border-r-[#9b9b9b] border-b-2 border-b-[#217346] bg-[#d2d2d2] pt-px text-[#217346]" : "border-b border-[#9b9b9b] pt-0.5"}`}
                >
                  {c.name}
                </th>
              ))}
              <th className="border-b border-[#9b9b9b] p-0" />
            </tr>
          </thead>
          <tbody>
            {rows.map((r) => {
              const inRange = r >= 2 && r <= 6;
              return (
                <tr key={r} className={r === 9 ? "h-6" : "h-[31px]"}>
                  <th
                    className={`p-0 text-center align-bottom leading-[14px] font-normal ${inRange ? "border-r-2 border-b border-r-[#217346] border-b-[#b8b8b8] bg-[#d2d2d2] text-[#217346]" : "border-r border-b border-r-[#9b9b9b] border-b-[#c6c6c6] bg-[#e6e6e6] text-[#222]"}`}
                  >
                    {r}
                  </th>
                  {COLUMNS.map((c, i) => {
                    const shaded = c.name === "B" && r > 2 && inRange;
                    return (
                      <td
                        key={c.name}
                        className={`relative border-r border-b px-0 pb-0 text-center leading-5 ${r === 1 ? "pt-0 text-[15px]" : "pt-[3px]"} ${shaded ? "border-[#a3a3a3] bg-[#c6c6c6]" : "border-[#d4d4d4]"}`}
                      >
                        {ROWS[r]?.[i]}
                        {c.name === "B" && r === 2 && (
                          <span className="pointer-events-none absolute -top-0.5 -left-0.5 z-10 h-[158px] w-[168px] border-2 border-[#217346]" />
                        )}
                      </td>
                    );
                  })}
                  <td className="border-b border-[#d4d4d4] p-0" />
                </tr>
              );
            })}
          </tbody>
        </table>
      </div>
      <div className="flex w-[19px] flex-col items-center pt-0.5">
        <button aria-label="向上滚动" className="flex h-[15px] w-[15px] items-center justify-center border border-[#ababab] bg-white">
          <svg width="7" height="4" viewBox="0 0 7 4"><path d="M0 4h7L3.500 0z" fill="#666" /></svg>
        </button>
        <div className="w-[15px] flex-1 bg-[#dadada]">
          <div className="h-[17px] border border-[#ababab] bg-white" />
        </div>
        <button aria-label="向下滚动" className="flex h-[14px] w-[15px] items-center justify-center border border-[#ababab] bg-white">
          <Caret />
        </button>
      </div>
    </div>
  );
}

/* ---------- bottom bars ---------- */

function SheetBar() {
  const plain = "border-r border-[#9b9b9b] my-[3px] pb-0.5 pl-3 pr-[11px] leading-[18px]";
  return (
    <div className="flex h-7 shrink-0 items-start text-[13px] whitespace-nowrap text-[#444]">
      <div className="my-[3px] flex w-[101px] items-center gap-[23px] border-r border-[#9b9b9b] pl-[27px]">
        <svg width="5" height="20" viewBox="0 0 5 20"><path d="M5 6v8L0 10z" fill="#b8b8b8" /></svg>
        <svg width="5" height="20" viewBox="0 0 5 20"><path d="M0 6v8l5-4z" fill="#b8b8b8" /></svg>
      </div>
      <button className={plain}>成绩表</button>
      <button className={plain}>员工信息</button>
      <button className={plain}>田字格</button>
      <button className="mx-0.5 mt-[3px] bg-[#bdd7ee] px-[11px] pb-1 leading-[18px] text-black">XXX公司销售额</button>
      <span className="my-[3px] h-5 w-px bg-[#9b9b9b]" />
      <button className="mx-0.5 mt-[3px] bg-[#f4b084] px-[10px] pb-1 leading-[18px] text-black">课程表</button>
      <span className="my-[3px] h-5 w-px bg-[#9b9b9b]" />
      <button className={plain}>数据透视表教程</button>
      <button className="my-[3px] px-[13px] pb-0.5 leading-[18px]">Sheet5</button>
      <button className="-mt-px border-x border-b-2 border-x-[#ababab] border-b-[#217346] bg-white px-[13px] pt-[3px] pb-[3px] leading-[18px] text-[#217346]">Sheet6</button>
      <button aria-label="新工作表" className="mt-[5px] ml-[33px]">
        <svg width="17" height="17" viewBox="0 0 17 17" fill="none">
          <circle cx="8.500" cy="8.500" r="7.500" stroke="#777" />
          <path d="M4.500 8.500h8M8.500 4.500v8" stroke="#666" strokeWidth="2" />
        </svg>
      </button>
      <div className="mr-[15px] ml-auto flex flex-col gap-[3px] self-center">
        <span className="size-0.5 bg-[#a8a8a8]" />
        <span className="size-0.5 bg-[#a8a8a8]" />
        <span className="size-0.5 bg-[#a8a8a8]" />
      </div>
      <div className="mr-[19px] flex h-[15px] w-[38%] self-center bg-[#dadada]">
        <button aria-label="向左滚动" className="flex w-4 items-center justify-center border border-[#ababab] bg-white">
          <svg width="4" height="7" viewBox="0 0 4 7"><path d="M4 0v7L0 3.500z" fill="#555" /></svg>
        </button>
        <div className="-ml-px w-[61%] border border-[#ababab] bg-white" />
        <button aria-label="向右滚动" className="ml-auto flex w-4 items-center justify-center border border-[#ababab] bg-white">
          <svg width="4" height="7" viewBox="0 0 4 7"><path d="M0 0v7l4-3.500z" fill="#555" /></svg>
        </button>
      </div>
    </div>
  );
}

function StatusBar() {
  const [zoom, setZoom] = useState(50);
  const stats = ["平均值: 2023/5/18", "计数: 5", "数值计数: 5", "最小值: 2023/5/1", "最大值: 2023/5/29", "求和: 2516/11/28"];
  return (
    <footer className="flex h-[17px] shrink-0 items-start overflow-hidden border-t border-[#c6c6c6] bg-[#f1f1f1] pr-[19px] pl-[7px] text-[12px] leading-[18px] whitespace-nowrap text-[#444]">
      <span>就绪</span>
      <span className="ml-[18px]">数字</span>
      <button aria-label="录制宏" className="mt-[3px] ml-[17px]">
        <svg width="13" height="13" viewBox="0 0 13 13" fill="none">
          <path d="M2.500 12.500v-10h10v10z" fill="#fff" stroke="#777" />
          <path d="M6 2h7v3H6z" fill="#777" />
          <path d="M4 7.500h7M4 10h7" stroke="#777" strokeDasharray="2 1" />
          <circle cx="3" cy="3" r="3" fill="#777" />
        </svg>
      </button>
      <div className="mr-[19px] ml-auto flex gap-[18px]">
        {stats.map((s) => (
          <span key={s}>{s}</span>
        ))}
      </div>
      <button aria-label="普通" className="flex h-[17px] w-[38px] justify-center bg-[#c9c9c9] pt-[3px]">
        <svg width="15" height="13" viewBox="0 0 15 13" fill="none"><path d="M0.500 0.500h14v12h-14zM0 4.500h15M0 8.500h15M5 0v13M10 0v13" stroke="#666" /></svg>
      </button>
      <button aria-label="页面布局" className="flex h-[17px] w-[38px] justify-center pt-[3px]">
        <svg width="14" height="13" viewBox="0 0 14 13" fill="none"><path d="M0.500 0.500h13v12h-13zM3.500 2.500h7v9h-7zM5 5h4M5 7h4M5 9h4" stroke="#666" /></svg>
      </button>
      <button aria-label="分页预览" className="flex h-[17px] w-[38px] justify-center pt-[3px]">
        <svg width="14" height="13" viewBox="0 0 14 13" fill="none"><path d="M0.500 0.500h13v12h-13zM4.500 0v8M9.500 0v8M0 8.500h10" stroke="#666" /></svg>
      </button>
      <button aria-label="缩小" className="flex w-[15px] justify-center pt-[9px]">
        <span className="h-0.5 w-[6px] bg-[#555]" />
      </button>
      <input
        type="range"
        aria-label="缩放"
        value={zoom}
        onChange={(e) => setZoom(Number(e.target.value))}
        className="mt-1 h-[11px] w-[100px] appearance-none bg-transparent [&::-webkit-slider-runnable-track]:h-px [&::-webkit-slider-runnable-track]:bg-[#8a8a8a] [&::-webkit-slider-thumb]:-mt-[5px] [&::-webkit-slider-thumb]:h-[11px] [&::-webkit-slider-thumb]:w-1 [&::-webkit-slider-thumb]:appearance-none [&::-webkit-slider-thumb]:bg-[#555]"
      />
      <button aria-label="放大" className="flex w-[17px] justify-center pt-[6px]">
        <svg width="8" height="8" viewBox="0 0 8 8"><path d="M0 4h8M4 0v8" stroke="#555" strokeWidth="2" /></svg>
      </button>
      <span className="w-[42px] text-right">100%</span>
    </footer>
  );
}

/* ---------- floating panels ---------- */

function MiniToolbar() {
  return (
    <div className="absolute top-[313px] left-[314px] z-20 flex flex-col border border-[#c6c6c6] bg-white py-[3px] pr-0.5 pl-[2px] text-[12px] text-[#444] shadow-md">
      <div className="flex h-6 items-center">
        <label className="ml-px flex h-[23px] w-[69px] items-center border border-[#c6c6c6] pr-1 pl-0.5">
          <select aria-label="字体" defaultValue="等线" className="w-0 flex-1 appearance-none outline-none">
            <option>等线</option>
          </select>
          <Caret />
        </label>
        <label className="-ml-px flex h-[23px] w-[50px] items-center border border-[#c6c6c6] pr-1 pl-[3px]">
          <select aria-label="字号" defaultValue="11" className="w-0 flex-1 appearance-none text-[13px] outline-none">
            <option>11</option>
          </select>
          <Caret />
        </label>
        <button aria-label="增大字号" className="flex w-6 justify-center">
          <Svg size={16}>
            <text x="1" y="14" fontSize="14" fontWeight="600" fill="#666" fontFamily="Open Sans">A</text>
            <path d="M10 4h5l-2.500-3z" fill="#3f7ab8" />
          </Svg>
        </button>
        <button aria-label="减小字号" className="flex w-[22px] justify-center">
          <Svg size={16}>
            <text x="1" y="14" fontSize="12" fontWeight="600" fill="#666" fontFamily="Open Sans">A</text>
            <path d="M10 1h5l-2.500 3z" fill="#3f7ab8" />
          </Svg>
        </button>
        <button aria-label="会计数字格式" className="flex w-[30px] items-center justify-center gap-1">
          <Svg size={16}>
            <path d="M0 0h16v9H0z" fill="#3f7ab8" />
            <path d="M2 2h12v5H2z" fill="#fff" />
            <circle cx="8" cy="4.500" r="2" fill="#3f7ab8" />
            <path d="M8 8h8v7H8zM4 11h5v4H4z" fill="#fff" />
            <path d="M9 9.500h5M9 12h6M5 12.500h3M5 15h10" stroke="#eab767" strokeWidth="1.800" />
          </Svg>
          <Caret />
        </button>
        <button className="w-[25px] text-[15px] leading-4">%</button>
        <button className="w-[17px] pb-3 text-[20px] leading-4 font-bold">,</button>
        <button aria-label="合并后居中" className="flex w-[27px] justify-center">
          <Svg size={16}>
            <path d="M0.500 0.500h15v14h-15zM0 3.500h16M0 11.500h16M5.500 0v3M10.500 0v3M5.500 12v3M10.500 12v3" stroke="#666" />
            <path d="M3 7.500h10M5 5.500l-2 2 2 2M11 5.500l2 2-2 2" stroke="#3f7ab8" />
          </Svg>
        </button>
      </div>
      <div className="flex h-6 items-center">
        <button className="w-[22px] text-[13px] font-bold">B</button>
        <button className="w-[22px] font-[Liberation_Serif] text-[15px] font-bold italic">I</button>
        <button aria-label="居中" className="flex h-6 w-[22px] items-center justify-center bg-[#c6c6c6]">
          <svg width="15" height="12" viewBox="0 0 15 12"><path d="M0 1h15M3 4.300h9M0 7.600h15M3 11h9" stroke="#555" /></svg>
        </button>
        <button aria-label="填充颜色" className="flex w-[34px] items-center justify-center gap-[6px]">
          <Svg size={16}>
            <path d="M2 6.500L8 1.500l5 4.500-6 5z" fill="#fff" stroke="#666" strokeWidth="1.200" />
            <path d="M6 5V0.500h2" stroke="#666" />
            <path d="M12 4c3 0 4 3 3 7-1-2-2-3-4-3z" fill="#3f7ab8" />
            <path d="M0 12h16v4H0z" fill="#ff0" />
          </Svg>
          <Caret />
        </button>
        <button aria-label="字体颜色" className="flex w-[34px] items-center justify-center gap-[6px]">
          <Svg size={16}>
            <text x="8" y="11" fontSize="13" fontWeight="600" textAnchor="middle" fill="#666" fontFamily="Open Sans">A</text>
            <path d="M0 12h16v4H0z" fill="#d90000" />
          </Svg>
          <Caret />
        </button>
        <button aria-label="边框" className="flex w-[34px] items-center justify-center gap-[8px]">
          <svg width="14" height="14" viewBox="0 0 14 14" fill="none">
            <path d="M0.500 0.500h13v12H0.500zM7 0v13M0 6.500h14" stroke="#888" strokeDasharray="1 1" />
            <path d="M0 13h14" stroke="#555" strokeWidth="1.500" />
          </svg>
          <Caret />
        </button>
        <button aria-label="增加小数位数" className="flex w-[22px] justify-center">
          <Svg size={16}>
            <g fontSize="8" fontWeight="600" fill="#444" fontFamily="Open Sans"><text x="8" y="7">.0</text><text x="3" y="15">.00</text></g>
            <path d="M7 4.500H1.500M3.500 2.500l-2 2 2 2" stroke="#3f7ab8" strokeWidth="1.300" />
          </Svg>
        </button>
        <button aria-label="减少小数位数" className="flex w-[22px] justify-center">
          <Svg size={16}>
            <g fontSize="8" fontWeight="600" fill="#444" fontFamily="Open Sans"><text x="3" y="7">.00</text><text x="8" y="15">.0</text></g>
            <path d="M1 12.500h5.500M4.500 10.500l2 2-2 2" stroke="#3f7ab8" strokeWidth="1.300" />
          </Svg>
        </button>
        <button aria-label="格式刷" className="flex w-6 justify-center">
          <Svg size={16}>
            <path d="M0 8l5-2 5 5-4 5z" fill="#eac282" />
            <path d="M5 6l3-3 5 5-3 3z" fill="#777" />
            <path d="M10 6l5-5" stroke="#555" strokeWidth="3" />
          </Svg>
        </button>
      </div>
    </div>
  );
}

const MENU: MenuEntry[] = [
  { label: "剪切", hotkey: "T", icon: CutIcon },
  { label: "复制", hotkey: "C", icon: CopyIcon },
  { kind: "header", label: "粘贴选项:", icon: PasteIcon },
  { kind: "paste" },
  { label: "选择性粘贴", hotkey: "S", more: true },
  { kind: "separator" },
  { label: "智能查找", hotkey: "L", icon: LookupIcon },
  { kind: "separator" },
  { label: "插入", hotkey: "I", more: true },
  { label: "删除", hotkey: "D", more: true },
  { label: "清除内容", hotkey: "N" },
  { kind: "separator" },
  { label: "快速分析", hotkey: "Q", icon: QuickIcon },
  { label: "筛选", hotkey: "E", arrow: true },
  { label: "排序", hotkey: "O", arrow: true, active: true },
  { kind: "separator" },
  { label: "插入批注", hotkey: "M", icon: CommentIcon },
  { kind: "separator" },
  { label: "设置单元格格式", hotkey: "F", more: true, icon: FormatIcon },
  { label: "从下拉列表中选择", hotkey: "K", more: true },
  { label: "显示拼音字段", hotkey: "S", icon: PinyinIcon },
  { label: "定义名称", hotkey: "A", more: true },
  { label: "超链接", hotkey: "I", more: true, icon: LinkIcon },
];

const SUBMENU: MenuEntry[] = [
  { label: "升序", hotkey: "S", icon: <OrderIcon first="A" second="Z" />, active: true },
  { label: "降序", hotkey: "O", icon: <OrderIcon first="Z" second="A" /> },
  { label: "将所选单元格颜色放在最前面", hotkey: "C" },
  { label: "将所选字体颜色放在最前面", hotkey: "F" },
  { label: "将所选单元格图标放在最前面", hotkey: "I" },
  { label: "自定义排序", hotkey: "U", more: true, icon: CustomSortIcon },
];

function MenuRow({ entry }: { entry: MenuEntry }) {
  if (entry.kind === "separator") {
    return <div className="mr-0.5 ml-8 h-0.5 border-t border-[#dcdcdc]" />;
  }
  if (entry.kind === "header") {
    return (
      <div className="flex h-6 items-center font-semibold">
        <span className="flex w-[25px] justify-center">{entry.icon}</span>
        <span className="mr-px flex h-6 flex-1 items-center bg-[#e9e9e9] pl-[9px]">{entry.label}</span>
      </div>
    );
  }
  if (entry.kind === "paste") {
    return (
      <button aria-label="粘贴" className="flex h-[30px] items-center pl-[31px]">
        {PasteBigIcon}
      </button>
    );
  }
  return (
    <button className={`flex h-[25px] w-full items-center text-left whitespace-nowrap ${entry.active ? "bg-[#c5c5c5] text-[#222]" : ""}`}>
      <span className="mr-[6px] flex w-[26px] justify-center">{entry.icon}</span>
      <span>
        {entry.label}(<u className="underline-offset-2">{entry.hotkey}</u>){entry.more && "..."}
      </span>
      {entry.arrow && (
        <svg width="4" height="8" viewBox="0 0 4 8" className="mr-[10px] ml-auto"><path d="M0 0v8l4-4z" fill="#666" /></svg>
      )}
    </button>
  );
}

function Menus() {
  return (
    <>
      <div role="menu" className="absolute top-[384px] left-[314px] z-20 w-[179px] border border-[#c6c6c6] bg-white py-px text-[12px] text-[#555] shadow-md">
        {MENU.map((entry, i) => (
          <MenuRow key={i} entry={entry} />
        ))}
      </div>
      <div role="menu" className="absolute top-[671px] left-[491px] z-30 w-[230px] border border-[#c6c6c6] bg-white py-px text-[12px] text-[#555] shadow-md">
        {SUBMENU.map((entry, i) => (
          <MenuRow key={i} entry={entry} />
        ))}
      </div>
    </>
  );
}

/* ---------- annotations ---------- */

const ARROWS = [
  { from: [437, 176], to: [324, 54], head: 30 },
  { from: [517, 146], to: [569, 83], head: 26 },
  { from: [557, 163], to: [583, 125], head: 24 },
  { from: [651, 198], to: [635, 113], head: 28 },
  { from: [284, 414], to: [362, 671], head: 28 },
  { from: [434, 697], to: [488, 694], head: 27 },
];

function Annotations() {
  return (
    <svg width="730" height="710" viewBox="0 0 730 710" className="pointer-events-none absolute top-0 -left-px z-40 drop-shadow-[2px_2px_2px_rgba(0,0,0,0.55)]" aria-hidden="true">
      {ARROWS.map((a, i) => {
        const dx = a.to[0] - a.from[0];
        const dy = a.to[1] - a.from[1];
        const length = Math.hypot(dx, dy);
        const angle = (Math.atan2(dy, dx) * 180) / Math.PI;
        return (
          <g key={i} transform={`translate(${a.from[0]} ${a.from[1]}) rotate(${angle})`}>
            <path d={`M0 0H${length - a.head + 6}`} stroke="#dd1111" strokeWidth="3" strokeLinecap="round" />
            <path d={`M${length} 0l${-a.head} 7l5 -7l-5 -7z`} fill="#f00808" />
          </g>
        );
      })}
      <path d="M706.500 684.500v16l4-3.500 2.500 6 3-1.500-2.500-5.500h5z" fill="#fff" stroke="#000" />
    </svg>
  );
}

function Watermark() {
  return (
    <div className="pointer-events-none absolute right-3 bottom-[7px] z-40 flex items-center opacity-75">
      <svg width="84" height="42" viewBox="0 0 84 42" aria-hidden="true">
        <path d="M0 36C10 15 22 5 38 3c-5 4-6 8-4 12-8 0-20 8-34 21z" fill="#fff" opacity="0.700" />
        <path d="M72 1C54 2 38 14 38 25c1 7 12 10 19 6-9 0-12-5-10-11 3-8 12-15 25-19z" fill="#4a9be0" />
        <path d="M62 10c-9 4-15 10-13 15 2 4 9 4 11 0 2-4-1-6-4-4 0-4 2-7 6-11z" fill="#3186cf" />
        <path d="M70 15c8 1 9 7 4 13-7 8-18 11-31 10 11-2 19-5 23-11 3-5 4-8 4-12z" fill="#7fbf4a" />
      </svg>
      <div>
        <div className="text-[21px] leading-[24px] font-medium text-[#5b9fd8]">极光下载站</div>
        <div className="font-[Liberation_Sans] text-[17px] leading-[18px] font-medium text-[#3fae5a]">www.xz7.com</div>
      </div>
    </div>
  );
}

export default function App() {
  return (
    <main className="relative flex h-screen flex-col overflow-hidden border-l border-[#217346] bg-[#e6e6e6] font-['Open_Sans','Noto_Sans_CJK_SC',sans-serif]">
      <TitleBar />
      <Ribbon />
      <QuickAccess />
      <FormulaBar />
      <Grid />
      <SheetBar />
      <StatusBar />
      <MiniToolbar />
      <Menus />
      <Annotations />
      <Watermark />
    </main>
  );
}
